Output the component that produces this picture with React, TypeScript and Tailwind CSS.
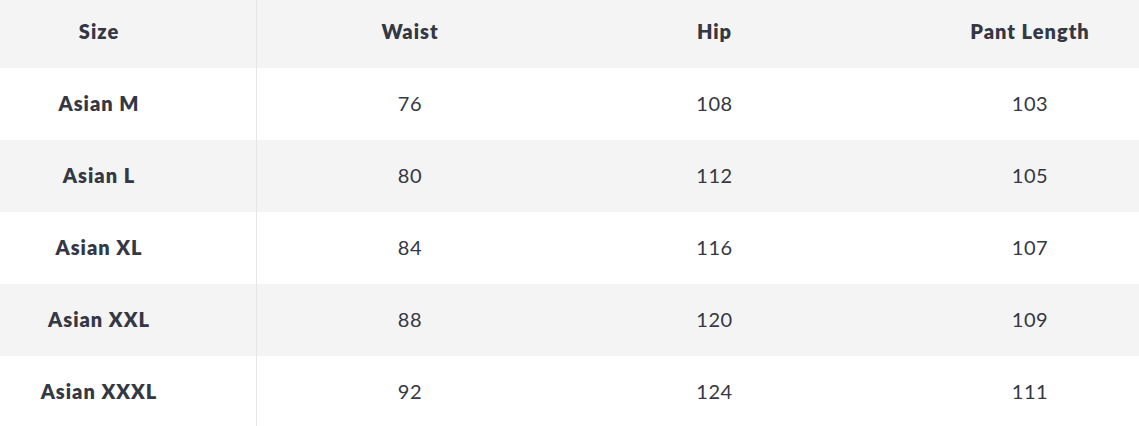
const headers = ["Size", "Waist", "Hip", "Pant Length"];

const rows: [string, number, number, number][] = [
  ["Asian M", 76, 108, 103],
  ["Asian L", 80, 112, 105],
  ["Asian XL", 84, 116, 107],
  ["Asian XXL", 88, 120, 109],
  ["Asian XXXL", 92, 124, 111],
];

const cols = "grid grid-cols-[257px_306px_303px_328px]";

export default function App() {
  return (
    <div
      className="w-[1139px] h-[426px] overflow-hidden bg-white text-[#343744]"
      style={{ fontFamily: "Lato, 'Open Sans', sans-serif" }}
    >
      <div className="w-[1194px]">
        <div className={`${cols} h-[68px] bg-[#f4f4f4] text-[20px] font-extrabold tracking-[0.05em]`}>
          {headers.map((h, i) => (
            <div
              key={h}
              className={`flex items-center justify-center pb-[6px] ${
                i === 0 ? "border-r border-[#e6e6e6] pr-[58px]" : ""
              }`}
            >
              {h}
            </div>
          ))}
        </div>
        {rows.map((r, idx) => (
          <div
            key={r[0]}
            className={`${cols} h-[72px] text-[20px] tracking-[0.03em] ${idx % 2 === 1 ? "bg-[#f4f4f4]" : "bg-white"}`}
          >
            <div className="flex items-center justify-center border-r border-[#e6e6e6] pr-[58px] pb-[2px] font-extrabold tracking-[0.05em]">
              {r[0]}
            </div>
            <div className="flex items-center justify-center pb-[2px]">{r[1]}</div>
            <div className="flex items-center justify-center pb-[2px]">{r[2]}</div>
            <div className="flex items-center justify-center pb-[2px]">{r[3]}</div>
          </div>
        ))}
      </div>
    </div>
  );
}
